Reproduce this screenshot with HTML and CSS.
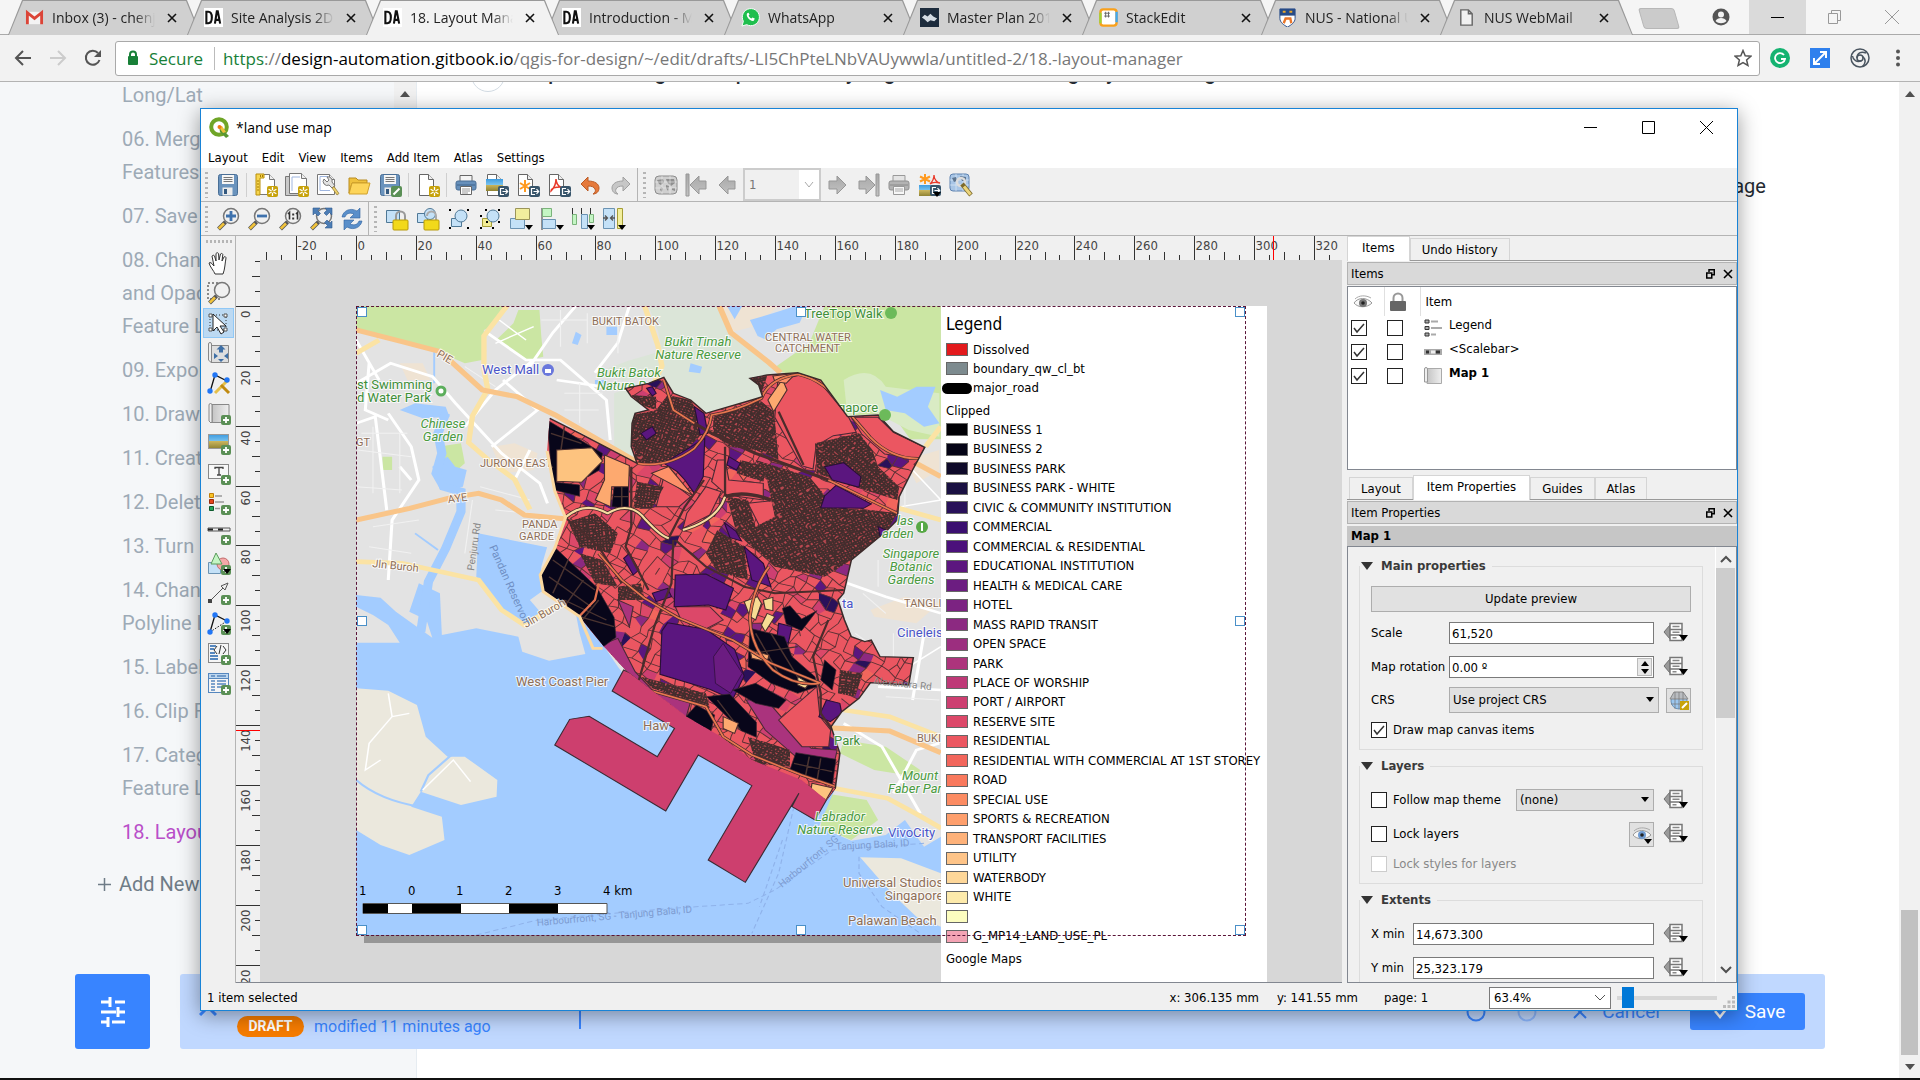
FILE: index.html
```html
<!DOCTYPE html>
<html lang="en">
<head>
<meta charset="utf-8">
<title>18. Layout Manager</title>
<link rel="stylesheet" href="styles.css">
</head>
<body>
<svg class="defs" aria-hidden="true">
  <defs>
    <linearGradient id="gSky" x1="0" y1="0" x2="0" y2="1"><stop offset="0" stop-color="#3d9be0"/><stop offset=".5" stop-color="#7cc4ee"/><stop offset=".5" stop-color="#c9b45c"/><stop offset="1" stop-color="#8f8232"/></linearGradient>
    <linearGradient id="gRoll"><stop offset="0" stop-color="#c4c4c4"/><stop offset="1" stop-color="#efefef"/></linearGradient>
    <linearGradient id="gGrey" x1="0" y1="0" x2="0" y2="1"><stop offset="0" stop-color="#a8a8a8"/><stop offset="1" stop-color="#c2c2c2"/></linearGradient>
  </defs>
  <symbol id="bStar" viewBox="0 0 11 11"><rect width="11" height="11" rx="2" fill="#c7a20a"/><path d="M5.500 1v9M1.600 3.300l7.800 4.400M9.400 3.300L1.600 7.700" stroke="#fff" stroke-width="1.300"/><circle cx="5.500" cy="5.500" r="1.200" fill="#c7a20a"/></symbol>
  <symbol id="bExp" viewBox="0 0 11 11"><rect width="11" height="11" rx="2" fill="#38556b"/><path d="M6 2.500H2.500v6H6M4.500 5.500h5M7.500 3.200l2.200 2.300-2.200 2.300" fill="none" stroke="#fff" stroke-width="1.200"/></symbol>
  <symbol id="bPlus" viewBox="0 0 10 10"><rect width="10" height="10" rx="2" fill="#5a8f55"/><path d="M5 2v6M2 5h6" stroke="#fff" stroke-width="1.800"/></symbol>
  <symbol id="bDrop" viewBox="0 0 8 5"><path d="M0 0h8L4 5z" fill="#000"/></symbol>
  <symbol id="sheet" viewBox="0 0 24 24"><path d="M3.500 1.500h12l5 5v15h-17z" fill="#fff" stroke="#777"/><path d="M15.500 1.500v5h5" fill="#eee" stroke="#777"/></symbol>
  <symbol id="page" viewBox="0 0 24 24"><path d="M4.500 1.500h9l5 5v16h-14z" fill="#fff" stroke="#666"/><path d="M13.500 1.500v5h5" fill="#eee" stroke="#666"/></symbol>
  <symbol id="lens" viewBox="0 0 24 24"><circle cx="15" cy="9" r="7.500" fill="#f0f0f0" stroke="#777" stroke-width="1.500"/><path d="M9.500 15l-7 7" stroke="#555" stroke-width="4"/><path d="M8 16.500L2.800 21.700" stroke="#f3c43a" stroke-width="2.600"/></symbol>

  <symbol id="save" viewBox="0 0 24 24"><rect x="2.500" y="1.500" width="19" height="21" rx="2" fill="#6a93bd" stroke="#4a6f96"/><path d="M6 2h12v9H6z" fill="#f6f6f6"/><path d="M7.500 4.500h9M7.500 6.500h9M7.500 8.500h9" stroke="#777"/><path d="M6.500 14.500h10v8h-10z" fill="#ececec"/><path d="M8 16h3v5H8z" fill="#34597f"/></symbol>
  <symbol id="newlayout" viewBox="0 0 24 24"><use href="#sheet"/><path d="M2 1h8v4H6v17H2z" fill="#f6d54f" stroke="#b98f0a"/><path d="M6.500 2v2M8.500 2v2M3 8h2M3 11h2M3 14h2M3 17h2" stroke="#a67c00"/><use href="#bStar" x="13" y="13" width="11" height="11"/></symbol>
  <symbol id="duplayout" viewBox="0 0 24 24"><path d="M.500 3.500h4v16h13v3H.500z" fill="#c9c9c9" stroke="#777"/><use href="#sheet" x="1" y="-1"/><path d="M7 4h8M7 4v14" stroke="#9fb6e0"/><use href="#bStar" x="13" y="13" width="11" height="11"/></symbol>
  <symbol id="manager" viewBox="0 0 24 24"><use href="#sheet" x="-2"/><path d="M4 3.500h8M4 3.500v14h10" fill="none" stroke="#9fb6e0"/><path d="M8 6a4 4 0 0 0 5 6l3 3 3-2-3-4a4 4 0 0 0-5-5l2 3-2 2z" fill="#e2e2e2" stroke="#777"/><path d="M16 15l5 7 2-1.500-5-7z" fill="#ecd06c" stroke="#8b7430" stroke-width=".700"/></symbol>
  <symbol id="folder" viewBox="0 0 24 24"><path d="M2 5h7l2 2h9v3H5L2 20z" fill="#efc13d" stroke="#b98c22"/><path d="M5 10h18l-3 11H2z" fill="#fdd55a" stroke="#d0a12c"/></symbol>
  <symbol id="saveas" viewBox="0 0 24 24"><use href="#save"/><rect x="13" y="13" width="11" height="11" rx="2" fill="#5a8f55"/><path d="M15.500 21.500l6-6" stroke="#fff" stroke-width="2"/></symbol>
  <symbol id="addpage" viewBox="0 0 24 24"><use href="#page" x="-1"/><use href="#bStar" x="13" y="13" width="11" height="11"/></symbol>
  <symbol id="print" viewBox="0 0 24 24"><path d="M6 2.500h12V9H6z" fill="#f4f4f4" stroke="#666"/><rect x="2" y="8" width="20" height="9" rx="2" fill="#6790bb" stroke="#4a6f96"/><path d="M3 12h18" stroke="#3e638a"/><path d="M6.500 13.500h11v8h-11z" fill="#fff" stroke="#666"/><path d="M8 16h8M8 18h8M8 20h6" stroke="#999"/></symbol>
  <symbol id="printg" viewBox="0 0 24 24"><path d="M6 2.500h12V9H6z" fill="#e4e4e4" stroke="#999"/><rect x="2" y="8" width="20" height="9" rx="2" fill="#b3b3b3" stroke="#909090"/><path d="M3 12h18" stroke="#8a8a8a"/><path d="M6.500 13.500h11v8h-11z" fill="#f7f7f7" stroke="#999"/><path d="M8 16h8M8 18h8" stroke="#aaa"/></symbol>
  <symbol id="expimg" viewBox="0 0 24 24"><use href="#page" x="-2"/><rect x="1" y="6" width="17" height="12" fill="url(#gSky)"/><use href="#bExp" x="13" y="13" width="11" height="11"/></symbol>
  <symbol id="expsvg" viewBox="0 0 24 24"><use href="#page" x="-2"/><path d="M9 7v12M4 10l10 6M14 10L4 16" stroke="#ff9a1f" stroke-width="2"/><use href="#bExp" x="13" y="13" width="11" height="11"/></symbol>
  <symbol id="exppdf" viewBox="0 0 24 24"><use href="#page" x="-2"/><path d="M9 6c0 5-2 9-5 12 0-3 5-4 10-4-3 0-5-5-5-8z" fill="none" stroke="#e83a2b" stroke-width="1.500"/><use href="#bExp" x="13" y="13" width="11" height="11"/></symbol>
  <symbol id="undo" viewBox="0 0 24 24"><path d="M3 11l7-7v4c7 0 11 3 11 7 0 4-3 6-6 6 2-1 3-3 2-5s-3-3-7-3v5z" fill="#e5793b" stroke="#bb5a24"/></symbol>
  <symbol id="redo" viewBox="0 0 24 24"><path d="M21 11l-7-7v4C7 8 3 11 3 15c0 4 3 6 6 6-2-1-3-3-2-5s3-3 7-3v5z" fill="#c7c7c7" stroke="#a0a0a0"/></symbol>
  <symbol id="atlas" viewBox="0 0 24 24"><rect x="1" y="3" width="22" height="18" rx="4" fill="#cfcfcf" stroke="#8c8c8c"/><path d="M3 7l6-1 1 3-3 3-2-1zM7 14l2 1-1 4-2-2zM12 6l8 0 1 4-4 3-4-4zM12 12l3 1-1 5-2-3zM18 15l3 0v3l-3-1z" fill="#8f8f8f"/><path d="M8 3v18M16 3v18M1 9h22M1 15h22" stroke="#eee" stroke-width=".600"/></symbol>
  <symbol id="first" viewBox="0 0 24 24"><path d="M1 1h3v22H1zM5 12l9-9v5h7v8h-7v5z" fill="url(#gGrey)" stroke="#979797"/></symbol>
  <symbol id="prev" viewBox="0 0 24 24"><path d="M3 12l9-9v5h7v8h-7v5z" fill="url(#gGrey)" stroke="#979797"/></symbol>
  <symbol id="next" viewBox="0 0 24 24"><path d="M21 12l-9-9v5H4v8h8v5z" fill="url(#gGrey)" stroke="#979797"/></symbol>
  <symbol id="last" viewBox="0 0 24 24"><path d="M20 1h3v22h-3zM19 12l-9-9v5H3v8h7v5z" fill="url(#gGrey)" stroke="#979797"/></symbol>
  <symbol id="expatlas" viewBox="0 0 24 24"><path d="M7 1v10M2 3.500l10 5M12 3.500l-10 5" stroke="#ff9a1f" stroke-width="2"/><path d="M16 2c0 5-2 7-4 9 2-2 6-2 10-1-3 0-6-4-6-8z" fill="none" stroke="#e83a2b" stroke-width="1.300"/><rect x="1" y="12" width="18" height="11" fill="url(#gSky)"/><use href="#bExp" x="12" y="12" width="11" height="11"/><use href="#bDrop" x="15" y="19" width="8" height="5"/></symbol>
  <symbol id="setatlas" viewBox="0 0 24 24"><rect x="1" y="1" width="19" height="17" rx="3" fill="#a9c6e6" stroke="#5f83b0"/><path d="M1 7h19M1 12h19M7 1v17M14 1v17" stroke="#dbe9f6" stroke-width=".700"/><path d="M3 5l4-1 1 4-3 1zM11 3l6 1 0 4-4 0z" fill="#5f7690"/><circle cx="12" cy="9" r="4" fill="none" stroke="#ddd" stroke-width="2.500"/><path d="M13 11l9 11" stroke="#7c6a2c" stroke-width="4.500"/><path d="M15 13.500l6.500 8" stroke="#ecd57c" stroke-width="3"/></symbol>

  <symbol id="zin" viewBox="0 0 24 24"><use href="#lens"/><path d="M15 4v10M10 9h10" stroke="#3f72ad" stroke-width="2.800"/></symbol>
  <symbol id="zout" viewBox="0 0 24 24"><use href="#lens"/><path d="M10 9h10" stroke="#3f72ad" stroke-width="2.800"/></symbol>
  <symbol id="zone" viewBox="0 0 24 24"><use href="#lens"/><path d="M10 7l1.500-1.500V12.500M18 7l1.500-1.500V12.500" fill="none" stroke="#333" stroke-width="1.600"/><path d="M14.200 6.500h2v2h-2zM14.200 10.500h2v2h-2z" fill="#333"/></symbol>
  <symbol id="zfull" viewBox="0 0 24 24"><use href="#lens"/><path d="M4 1h7L8.500 3.500l3 3-2.500 2.500-3-3L4 8zM23 1v7l-2.500-2.500-3 3L15 6l3-3-2-2zM23 21h-7l2.500-2.500-3-3 2.500-2.500 3 3L23 14z" fill="#4c7db5" stroke="#305b8e" stroke-width=".600"/></symbol>
  <symbol id="refresh" viewBox="0 0 24 24"><path d="M2 10C3 4 10 0 17 4l3-3v10H10l4-4C9 5 6 7 5 10zM22 14c-1 6-8 10-15 6l-3 3V13h10l-4 4c5 2 8 0 9-3z" fill="#5a8fca" stroke="#2f629d" stroke-width=".600"/></symbol>
  <symbol id="lock" viewBox="0 0 24 24"><path d="M1.500 3.500h13v12h-13z" fill="#c4e1f7" stroke="#4f7896"/><path d="M11 13V9a4.500 4.500 0 0 1 9 0v4" fill="none" stroke="#999" stroke-width="2"/><rect x="8" y="13" width="15" height="10" rx="1" fill="#f2d91b" stroke="#b89a0a"/></symbol>
  <symbol id="unlock" viewBox="0 0 24 24"><path d="M1.500 6.500h10v9h-10z" fill="#c4e1f7" stroke="#4f7896"/><circle cx="14" cy="7" r="5.500" fill="#c4e1f7" stroke="#4f7896"/><path d="M11 9a4.500 4.500 0 0 1 9 0v4" fill="none" stroke="#aaa" stroke-width="2"/><rect x="8" y="13" width="15" height="10" rx="1" fill="#f2d91b" stroke="#b89a0a"/></symbol>
  <symbol id="group" viewBox="0 0 24 24"><path d="M4.500 11.500h10v8h-10z" fill="#c4e1f7" stroke="#4f7896"/><circle cx="14" cy="9" r="6" fill="#c4e1f7" stroke="#4f7896"/><path d="M2 3h2M20 3h2M2 21h2M20 21h2" stroke="#000" stroke-width="2"/></symbol>
  <symbol id="ungroup" viewBox="0 0 24 24"><path d="M4.500 11.500h9v8h-9z" fill="#f2ec94" stroke="#a59d35"/><circle cx="15" cy="9" r="6" fill="#c4e1f7" stroke="#4f7896"/><path d="M7 3h2M20 3h2M2 9h2M2 21h2M14 21h2M20 15h2M8 15h2" stroke="#000" stroke-width="2"/></symbol>
  <symbol id="raise" viewBox="0 0 24 24"><path d="M1.500 11.500h14v10h-14z" fill="#c4e1f7" stroke="#6b93b3"/><path d="M6.500 1.500h14v11h-14z" fill="#f2ee9d" stroke="#9b955a"/><use href="#bDrop" x="16" y="18" width="8" height="5"/></symbol>
  <symbol id="align" viewBox="0 0 24 24"><path d="M2 1v22" stroke="#333"/><path d="M2.500 1.500h9v8h-9z" fill="#c4f5c4" stroke="#7bb37b"/><path d="M2.500 12.500h13v9h-13z" fill="#c4e1f7" stroke="#6b93b3"/><use href="#bDrop" x="16" y="18" width="8" height="5"/></symbol>
  <symbol id="distr" viewBox="0 0 24 24"><path d="M1.500 1v8M10.500 1v6M19.500 1v8" stroke="#333"/><path d="M1.500 7.500h4v10h-4zM18.500 7.500h4v8h-4z" fill="#c4f5c4" stroke="#7bb37b"/><path d="M10.500 7.500h6v14h-6z" fill="#c4e1f7" stroke="#6b93b3"/><use href="#bDrop" x="16" y="18" width="8" height="5"/></symbol>
  <symbol id="resize" viewBox="0 0 24 24"><path d="M1.500 1.500h11v20h-11z" fill="#c4e1f7" stroke="#6b93b3"/><path d="M15.500 1.500h5v20h-5z" fill="#f2ee9d" stroke="#a59d35"/><path d="M1 11h4M3 8.500l2.500 2.500L3 13.500M13 11H9M11 8.500L8.500 11l2.500 2.500" fill="none" stroke="#555" stroke-width="1.300"/><use href="#bDrop" x="16" y="18" width="8" height="5"/></symbol>

  <symbol id="hand" viewBox="0 0 24 24"><path d="M8 23c-1-3-5-7-6-11 1-1 3 0 4 2l1 1L5 5c1-1 2-1 2.500 0L9 10V2.500c1-1 2-1 2.500 0L12 9l1.500-6c1-1 2-.500 2.300.500L15 10l2-4c1-1 2 0 2 1-1 5-1 11-3 16z" fill="#fff" stroke="#333"/></symbol>
  <symbol id="zsel" viewBox="0 0 24 24"><path d="M1 2h12v16H1z" fill="none" stroke="#222" stroke-dasharray="2 2"/><use href="#lens"/></symbol>
  <symbol id="select" viewBox="0 0 24 24"><path d="M3 4h16v15H3z" fill="none" stroke="#333" stroke-dasharray="1 2"/><path d="M2 3h3v3H2zM17 3h3v3h-3zM2 17h3v3H2zM17 17h3v3h-3z" fill="#fff" stroke="#555"/><path d="M6 3l0 17 4-4 4 7 3-2-4-6h6z" fill="#fff" stroke="#222"/></symbol>
  <symbol id="movec" viewBox="0 0 24 24"><path d="M4 4.500h17.500v17H4z" fill="#dedede" stroke="#888"/><path d="M1.500 3a1.500 1.500 0 0 1 3 0v18h-1l-2-2z" fill="#eee" stroke="#888"/><path d="M14 4l4.500 4.500H16v3h-4v-3H9.500zM14 21l-3-3h6zM7 12l4 3-4 3zM21 12l-4 3 4 3z" fill="#3f6fa5"/></symbol>
  <symbol id="nodes" viewBox="0 0 24 24"><path d="M3 21L8 4l12 6" fill="none" stroke="#111" stroke-width="1.300"/><path d="M8 22L20 10" stroke="#e5c04b" stroke-width="3"/><path d="M14 14l8 8" stroke="#c08a10" stroke-width="3"/><circle cx="8" cy="4" r="2.700" fill="#2176f5"/><circle cx="20" cy="9" r="2.700" fill="#2176f5"/><circle cx="3" cy="20" r="2.700" fill="#2176f5"/></symbol>
  <symbol id="addmap" viewBox="0 0 24 24"><path d="M5 3.500h17v18H5z" fill="url(#gRoll)" stroke="#888"/><path d="M2 4a1.500 1.500 0 0 1 3 0v17l-1 1-2-2z" fill="#eee" stroke="#888"/><use href="#bPlus" x="14" y="14" width="10" height="10"/></symbol>
  <symbol id="addimg" viewBox="0 0 24 24"><rect x="1.500" y="3.500" width="20" height="14" fill="url(#gSky)" stroke="#999"/><use href="#bPlus" x="14" y="14" width="10" height="10"/></symbol>
  <symbol id="addlab" viewBox="0 0 24 24"><rect x="1.500" y="3.500" width="20" height="14" fill="#f8f8f8" stroke="#888"/><path d="M8 8V6.500h8V8M12 7v7M10 14h4" fill="none" stroke="#444" stroke-width="1.300"/><use href="#bPlus" x="14" y="14" width="10" height="10"/></symbol>
  <symbol id="addleg" viewBox="0 0 24 24"><path d="M2.500 2.500h4v4h-4z" fill="#f7c325" stroke="#c17e0a"/><path d="M2.500 8.500h4v4h-4z" fill="#e5441b" stroke="#982a0c"/><path d="M2.500 15.500h4v4h-4z" fill="#25a55a" stroke="#0d5a2d"/><path d="M8 5h7M8 11h9M8 17.500h5" stroke="#999" stroke-width="1.500"/><use href="#bPlus" x="14" y="14" width="10" height="10"/></symbol>
  <symbol id="addbar" viewBox="0 0 24 24"><path d="M1 7h22v3H1z" fill="#eee" stroke="#555"/><path d="M1 8.500h5M11 8.500h5" stroke="#222" stroke-width="2"/><use href="#bPlus" x="14" y="14" width="10" height="10"/></symbol>
  <symbol id="addshape" viewBox="0 0 24 24"><path d="M1.500 11.500h12v11h-12z" fill="#c4e1f7" stroke="#6b93b3"/><circle cx="16" cy="13" r="6" fill="#f5a9a9" stroke="#c26b6b"/><path d="M9 2l6 11H4z" fill="#c4f5c4" stroke="#5b9b5b"/><use href="#bPlus" x="14" y="14" width="10" height="10"/><use href="#bDrop" x="16" y="18" width="8" height="5"/></symbol>
  <symbol id="addarrow" viewBox="0 0 24 24"><path d="M3 20L18 5" stroke="#555"/><path d="M21 2l-7 3 4 4z" fill="#eee" stroke="#555"/><path d="M1 18h4v4H1z" fill="#444"/><use href="#bPlus" x="14" y="14" width="10" height="10"/></symbol>
  <symbol id="addnode" viewBox="0 0 24 24"><path d="M3 21L8 4l12 6" fill="none" stroke="#111" stroke-width="1.300"/><path d="M3 21l17-11" stroke="#111" stroke-dasharray="1.500 1.500"/><circle cx="8" cy="4" r="2.700" fill="#2176f5"/><circle cx="20" cy="10" r="2.700" fill="#2176f5"/><circle cx="3" cy="21" r="2.700" fill="#2176f5"/><use href="#bPlus" x="14" y="14" width="10" height="10"/><use href="#bDrop" x="16" y="18" width="8" height="5"/></symbol>
  <symbol id="addhtml" viewBox="0 0 24 24"><rect x="1.500" y="2.500" width="20" height="19" fill="#f5f5f5" stroke="#888"/><path d="M3 5h6M3 8h4M3 12h5M3 15h8M3 18h8" stroke="#5687be" stroke-width="2"/><path d="M10 5L7 9l3 4M16 5l3 4-3 4M14 4l-2 9" fill="none" stroke="#333"/><use href="#bPlus" x="14" y="14" width="10" height="10"/></symbol>
  <symbol id="addtable" viewBox="0 0 24 24"><rect x="1.500" y="2.500" width="20" height="19" fill="#f5f5f5" stroke="#5687be"/><path d="M2 3h19v4H2z" fill="#bcd6ef"/><path d="M2 7.500h19" stroke="#5687be"/><path d="M4 5h4M10 5h9M4 10h4M10 10h9M4 13h4M10 13h9M4 16h4M10 16h5M4 19h4" stroke="#5687be" stroke-width="1.300"/><use href="#bPlus" x="14" y="14" width="10" height="10"/></symbol>

  <symbol id="dd" viewBox="0 0 26 24"><path d="M7 4L1 11l6 7z" fill="#9a9a9a" stroke="#707070"/><path d="M7 2.500h12v17H7zM7 8.500h12M7 14h12" fill="#fff" stroke="#777" stroke-width="1.500"/><path d="M9.500 5.500h7M9.500 11.300h7M9.500 16.800h4" stroke="#888" stroke-width="1.500"/><path d="M16 14h9l-4.500 6z" fill="#000"/></symbol>
  <symbol id="eye" viewBox="0 0 20 20"><path d="M1 11c4-6 13-6 18 0-5 5-14 5-18 0z" fill="#f7f7f7" stroke="#999"/><path d="M2 7c4-4 11-4 16-1" fill="none" stroke="#aaa"/><circle cx="10" cy="11" r="4" fill="currentColor"/><circle cx="10" cy="11" r="1.800" fill="#222"/></symbol>
  <symbol id="float" viewBox="0 0 9 10"><path d="M3 3V.750h5.250v5H6M.750 4h5v5h-5z" fill="none" stroke="#000" stroke-width="1.500"/></symbol>
  <symbol id="x" viewBox="0 0 10 10"><path d="M1 1l8 8M9 1L1 9" stroke="currentColor" stroke-width="1.600"/></symbol>
  <symbol id="da" viewBox="0 0 20 20"><rect width="20" height="20" fill="#fff"/><path d="M2.500 4v12h2c5 0 5-12 0-12zM11.500 16.500l2-13h1l2.500 13M12.500 12.500h4" fill="none" stroke="#111" stroke-width="2.200"/></symbol>
</svg>

<header class="chrome">
  <div class="strip">
    <nav class="tabs" aria-label="Browser tabs">
      <div class="tab"><svg class="fav" viewBox="0 0 20 20"><path d="M1 4h18v13H1z" fill="#f3f3f3"/><path d="M2.500 17V5l7.500 6 7.500-6v12" fill="none" stroke="#db4437" stroke-width="3"/></svg><span>Inbox (3) - chenjie</span><button aria-label="Close tab"><svg><use href="#x"/></svg></button></div>
      <div class="tab"><svg class="fav"><use href="#da"/></svg><span>Site Analysis 2D Map</span><button aria-label="Close tab"><svg><use href="#x"/></svg></button></div>
      <div class="tab on"><svg class="fav"><use href="#da"/></svg><span>18. Layout Manager</span><button aria-label="Close tab"><svg><use href="#x"/></svg></button></div>
      <div class="tab"><svg class="fav"><use href="#da"/></svg><span>Introduction - Map</span><button aria-label="Close tab"><svg><use href="#x"/></svg></button></div>
      <div class="tab"><svg class="fav" viewBox="0 0 20 20"><path d="M1 19l1.500-5A9 9 0 1 1 6 17.500z" fill="#1fbe4d" stroke="#fff"/><path d="M6.500 5.500c-2 3 3 9 7 8l1-2.500-2.500-1-1 1c-1.500-.500-2.500-1.500-3-3l1-1-1-2z" fill="#fff"/></svg><span>WhatsApp</span><button aria-label="Close tab"><svg><use href="#x"/></svg></button></div>
      <div class="tab"><svg class="fav" viewBox="0 0 20 20"><rect width="20" height="20" fill="#1d2c3d"/><path d="M2 10l3-3 3 2 3-3 3 3 4 2-3 3-4-1-3 2-3-3z" fill="#d3dbe3"/></svg><span>Master Plan 2014</span><button aria-label="Close tab"><svg><use href="#x"/></svg></button></div>
      <div class="tab"><svg class="fav" viewBox="0 0 20 20"><rect x="1.500" y="1.500" width="17" height="17" rx="3" fill="#fff" stroke="#f9a01b" stroke-width="2.500"/><path d="M1.500 16V5" stroke="#9bd33b" stroke-width="2.500"/><path d="M18.500 4v11" stroke="#3fa9f5" stroke-width="2.500"/><path d="M7 4v6M10 4v6M5.500 5.500h6M5.500 8.500h6" stroke="#666"/></svg><span>StackEdit</span><button aria-label="Close tab"><svg><use href="#x"/></svg></button></div>
      <div class="tab"><svg class="fav" viewBox="0 0 20 20"><path d="M2 1h16v10c0 4-4 7-8 9-4-2-8-5-8-9z" fill="#fff" stroke="#274b87"/><path d="M2 1h16v7H2z" fill="#274b87"/><path d="M5 4h3M12 4h3" stroke="#e9a72b" stroke-width="2"/><path d="M6 16l2-5 5 0 1 5" fill="none" stroke="#e9772b" stroke-width="2.500"/></svg><span>NUS - National Uni</span><button aria-label="Close tab"><svg><use href="#x"/></svg></button></div>
      <div class="tab"><svg class="fav" viewBox="0 0 20 20"><path d="M4 2h8l4 4v12H4zM12 2v4h4" fill="#f1f1f1" stroke="#666" stroke-width="1.500"/></svg><span>NUS WebMail</span><button aria-label="Close tab"><svg><use href="#x"/></svg></button></div>
    </nav>
    <button class="newtab" aria-label="New tab"></button>
    <div class="wbtns">
      <button aria-label="Profile"><svg width="18" height="18" viewBox="0 0 18 18"><circle cx="9" cy="9" r="8.500" fill="#555"/><circle cx="9" cy="6.500" r="3" fill="#f3f3f3"/><path d="M3.500 13c2-4 9-4 11 0-3 3-8 3-11 0z" fill="#f3f3f3"/></svg></button>
      <button class="hov" aria-label="Minimise"><svg width="14" height="14"><path d="M0 7.500h13" stroke="#000"/></svg></button>
      <button aria-label="Restore"><svg width="14" height="14"><path d="M.500 3.500h9v10h-9zM3.500 3V.500h9v10H10" fill="none" stroke="#999"/></svg></button>
      <button aria-label="Close"><svg width="14" height="14"><path d="M0 0l14 14M14 0L0 14" stroke="#999"/></svg></button>
    </div>
  </div>
  <div class="bar">
    <button aria-label="Back"><svg width="18" height="18" viewBox="0 0 18 18"><path d="M17 9H2M9 2L2 9l7 7" fill="none" stroke="#555" stroke-width="2"/></svg></button>
    <button aria-label="Forward"><svg width="18" height="18" viewBox="0 0 18 18"><path d="M1 9h15M9 2l7 7-7 7" fill="none" stroke="#ccc" stroke-width="2"/></svg></button>
    <button aria-label="Reload"><svg width="18" height="18" viewBox="0 0 18 18"><path d="M15.500 11a7 7 0 1 1-1.500-7" fill="none" stroke="#555" stroke-width="2"/><path d="M17 1v7h-7z" fill="#555"/></svg></button>
    <div class="omni">
      <svg width="12" height="16" viewBox="0 0 12 16"><path d="M3 7V4.500a3 3 0 0 1 6 0V7" fill="none" stroke="#188038" stroke-width="2"/><rect x="1" y="6" width="10" height="9" rx="1" fill="#188038"/></svg>
      <span class="sec">Secure</span>
      <span class="url"><b>https</b>://<i>design-automation.gitbook.io</i>/qgis-for-design/~/edit/drafts/-LI5ChPteLNbVAUywwla/untitled-2/18.-layout-manager</span>
      <button aria-label="Bookmark"><svg width="18" height="18" viewBox="0 0 18 18"><path d="M9 1.500l2.200 5.200 5.600.500-4.200 3.700 1.300 5.500L9 13.500l-4.900 2.900 1.300-5.500L1.200 7.200l5.600-.500z" fill="none" stroke="#555" stroke-width="1.500"/></svg></button>
    </div>
    <button class="ext" aria-label="Grammarly"><svg width="20" height="20"><circle cx="10" cy="10" r="10" fill="#15b371"/><path d="M14 7a5 5 0 1 0 1 4h-4" fill="none" stroke="#fff" stroke-width="1.800"/></svg></button>
    <button class="ext" aria-label="Full page capture"><svg width="20" height="20"><rect width="20" height="20" fill="#2f80ed"/><path d="M4 16L16 4M10 4h6v6M4 10v6h6" fill="none" stroke="#fff" stroke-width="2"/></svg></button>
    <button class="ext" aria-label="Extension"><svg width="20" height="20" fill="none" stroke="#4a5560" stroke-width="1.500"><circle cx="10" cy="10" r="9"/><circle cx="10" cy="10" r="3"/><path d="M7 10c0-5 4-7 9-5M11.500 12.600C7 15 3 12 2.500 8M12.500 8.500c4 3 3 7 0 10"/></svg></button>
    <button class="ext" aria-label="Menu"><svg width="20" height="20" fill="#555"><circle cx="10" cy="3.500" r="2"/><circle cx="10" cy="10" r="2"/><circle cx="10" cy="16.500" r="2"/></svg></button>
  </div>
</header>

<main class="site">
  <aside class="side">
    <ul>
      <li><a href="#p5">Long/Lat</a></li>
      <li><a href="#p6">06. Merge<br>Features</a></li>
      <li><a href="#p7">07. Save</a></li>
      <li><a href="#p8">08. Change<br>and Opacity<br>Feature Layer</a></li>
      <li><a href="#p9">09. Export</a></li>
      <li><a href="#p10">10. Draw</a></li>
      <li><a href="#p11">11. Create</a></li>
      <li><a href="#p12">12. Delete</a></li>
      <li><a href="#p13">13. Turn</a></li>
      <li><a href="#p14">14. Change<br>Polyline L</a></li>
      <li><a href="#p15">15. Label</a></li>
      <li><a href="#p16">16. Clip F</a></li>
      <li><a href="#p17">17. Categ<br>Feature L</a></li>
      <li><a class="cur" href="#p18">18. Layout</a></li>
    </ul>
    <button class="addnew"><svg width="13" height="13"><path d="M6.500 0v13M0 6.500h13" stroke="#6f7c87" stroke-width="1.500"/></svg>Add New Page</button>
    <div class="sidescroll"><svg width="10" height="6"><path d="M0 6l5-6 5 6z" fill="#505050"/></svg></div>
  </aside>
  <article class="doc">
    <span class="ring"></span>
    <p class="cut">Expand the Page Size option in every Page and Resize it using any measuring</p>
    <p class="tail">page</p>
  </article>
  <div class="mainscroll"><svg width="10" height="6"><path d="M0 6l5-6 5 6z" fill="#505050"/></svg><i></i><svg width="10" height="6"><path d="M0 0l5 6 5-6z" fill="#505050"/></svg></div>

  <div class="dock">
    <button class="tune" aria-label="Settings"><svg width="26" height="30" viewBox="0 0 26 30"><path d="M1 5h9M15 5h10M10 0v10M1 15h15M18 15h7M18 10v10M1 25h6M12 25h13M8 20v10" stroke="#fff" stroke-width="3"/></svg></button>
    <div class="draftbar">
      <svg class="chev" width="18" height="10"><path d="M1 9l8-8 8 8" fill="none" stroke="#3884ff" stroke-width="3"/></svg>
      <span class="badge">DRAFT</span>
      <span class="mod">modified 11 minutes ago</span>
      <span class="vr"></span>
      <span class="acts">
        <svg width="20" height="20"><circle cx="10" cy="10" r="8.500" fill="none" stroke="#3884ff" stroke-width="2"/></svg>
        <svg width="20" height="20"><circle cx="10" cy="10" r="8.500" fill="none" stroke="#8db8ff" stroke-width="2"/></svg>
        <button class="cancel"><svg width="14" height="14"><path d="M1 1l12 12M13 1L1 13" stroke="#3884ff" stroke-width="2"/></svg>Cancel</button>
        <button class="savebtn"><svg width="16" height="14"><path d="M2 6l5 6 7-9" fill="none" stroke="#fff" stroke-width="2.500"/></svg>Save</button>
      </span>
    </div>
  </div>
</main>
<div class="taskbar"></div>

<section class="win" aria-label="land use map">
  <div class="title">
    <svg width="21" height="21" viewBox="0 0 21 21"><circle cx="10" cy="10" r="7.800" fill="none" stroke="#6fa527" stroke-width="4"/><path d="M10 9l10 10-3 2-6-6z" fill="#589632"/><path d="M9 9l4 0 4 6-3 1z" fill="#f0c03a"/><circle cx="10.500" cy="10" r="2" fill="#ee7913"/></svg>
    <h1>*land use map</h1>
    <button aria-label="Minimise"><svg width="13" height="13"><path d="M0 6.500h13" stroke="#000"/></svg></button>
    <button aria-label="Maximise"><svg width="13" height="13"><path d="M.500.500h12v12h-12z" fill="none" stroke="#000"/></svg></button>
    <button aria-label="Close"><svg width="13" height="13"><path d="M0 0l13 13M13 0L0 13" stroke="#000"/></svg></button>
  </div>
  <nav class="menu"><button>Layout</button><button>Edit</button><button>View</button><button>Items</button><button>Add Item</button><button>Atlas</button><button>Settings</button></nav>

  <div class="tools">
    <i class="grip"></i>
    <button aria-label="Save"><svg><use href="#save"/></svg></button><i class="sep"></i>
    <button aria-label="New layout"><svg><use href="#newlayout"/></svg></button>
    <button aria-label="Duplicate"><svg><use href="#duplayout"/></svg></button>
    <button aria-label="Layout manager"><svg><use href="#manager"/></svg></button>
    <button aria-label="Open template"><svg><use href="#folder"/></svg></button>
    <button aria-label="Save as template"><svg><use href="#saveas"/></svg></button><i class="sep"></i>
    <button aria-label="Add page"><svg><use href="#addpage"/></svg></button><i class="sep"></i>
    <button aria-label="Print"><svg><use href="#print"/></svg></button>
    <button aria-label="Export image"><svg><use href="#expimg"/></svg></button>
    <button aria-label="Export SVG"><svg><use href="#expsvg"/></svg></button>
    <button aria-label="Export PDF"><svg><use href="#exppdf"/></svg></button>
    <button aria-label="Undo"><svg><use href="#undo"/></svg></button>
    <button aria-label="Redo"><svg><use href="#redo"/></svg></button>
    <i class="edge"></i><i class="grip"></i>
    <button aria-label="Preview atlas"><svg><use href="#atlas"/></svg></button>
    <button aria-label="First"><svg><use href="#first"/></svg></button>
    <button aria-label="Previous"><svg><use href="#prev"/></svg></button>
    <select class="feature" aria-label="Atlas feature" disabled><option>1</option></select>
    <button aria-label="Next"><svg><use href="#next"/></svg></button>
    <button aria-label="Last"><svg><use href="#last"/></svg></button>
    <button aria-label="Print atlas"><svg><use href="#printg"/></svg></button>
    <button aria-label="Export atlas"><svg><use href="#expatlas"/></svg></button>
    <button aria-label="Atlas settings"><svg><use href="#setatlas"/></svg></button>
  </div>
  <div class="tools">
    <i class="grip"></i>
    <button aria-label="Zoom in"><svg><use href="#zin"/></svg></button>
    <button aria-label="Zoom out"><svg><use href="#zout"/></svg></button>
    <button aria-label="Zoom 100%"><svg><use href="#zone"/></svg></button>
    <button aria-label="Zoom full"><svg><use href="#zfull"/></svg></button>
    <button aria-label="Refresh"><svg><use href="#refresh"/></svg></button>
    <i class="edge"></i><i class="grip"></i>
    <button aria-label="Lock"><svg><use href="#lock"/></svg></button>
    <button aria-label="Unlock"><svg><use href="#unlock"/></svg></button>
    <button aria-label="Group"><svg><use href="#group"/></svg></button>
    <button aria-label="Ungroup"><svg><use href="#ungroup"/></svg></button>
    <button aria-label="Raise"><svg><use href="#raise"/></svg></button>
    <button aria-label="Align"><svg><use href="#align"/></svg></button>
    <button aria-label="Distribute"><svg><use href="#distr"/></svg></button>
    <button aria-label="Resize"><svg><use href="#resize"/></svg></button>
  </div>

  <div class="work">
    <div class="box">
      <i class="hgrip"></i>
      <button aria-label="Pan"><svg><use href="#hand"/></svg></button>
      <button aria-label="Zoom"><svg><use href="#zsel"/></svg></button>
      <button class="on" aria-label="Select"><svg><use href="#select"/></svg></button>
      <button aria-label="Move content"><svg><use href="#movec"/></svg></button>
      <button aria-label="Edit nodes"><svg><use href="#nodes"/></svg></button>
      <button aria-label="Add map"><svg><use href="#addmap"/></svg></button>
      <button aria-label="Add picture"><svg><use href="#addimg"/></svg></button>
      <button aria-label="Add label"><svg><use href="#addlab"/></svg></button>
      <button aria-label="Add legend"><svg><use href="#addleg"/></svg></button>
      <button aria-label="Add scale bar"><svg><use href="#addbar"/></svg></button>
      <button aria-label="Add shape"><svg><use href="#addshape"/></svg></button>
      <button aria-label="Add arrow"><svg><use href="#addarrow"/></svg></button>
      <button aria-label="Add node item"><svg><use href="#addnode"/></svg></button>
      <button aria-label="Add HTML"><svg><use href="#addhtml"/></svg></button>
      <button aria-label="Add table"><svg><use href="#addtable"/></svg></button>
    </div>

    <div class="view">
      <svg class="rh" id="rulerH"></svg>
      <svg class="rv" id="rulerV"></svg>
      <div class="canvas">
        <div class="shadow"></div>
        <div class="paper"></div>
        <svg class="map" viewBox="356 306 585 629" width="585" height="629">
          <defs><clipPath id="area"><path d="M522 355L600 400 750 490 735 440 737 370 745 340 780 330 735 290 720 265 780 250 820 232 845 280 890 300 930 340 1050 300 1078 290 1068 255 1045 235 1090 225 1170 218 1230 240 1300 350 1380 345 1420 395 1502 442 1470 510 1435 590 1430 660 1400 695 1310 780 1290 880 1275 900 1292 960 1310 1010 1345 1025 1362 1020 1385 1070 1472 1073 1460 1155 1360 1148 1330 1195 1285 1235 1257 1280 1280 1360 1268 1465 1245 1500 1180 1440 1050 1380 970 1310 880 1250 720 1110 660 1035 600 950 505 870 497 820 535 745 563 650 535 570 515 450z"/></clipPath></defs>
          <g transform="translate(350,300) scale(.3827,.33333)">
            <path d="M0 0h1560v1920H0z" fill="#e3e3e3"/>
            <path d="M16 18H412L378 75 350 90 345 180 300 190 230 155 150 125 60 108 16 85zM440 30l55 0 5 80 5 60-40 10-45-30-38-30 45-50zM1100 210l100-80 40-112h304v400l-80 0-50-80-120 10-80-110zM230 440l60-10 10 60-40 40zM1290 1320l110 20 90 70-10 20-110-20-90-50zM1240 1480l110 20 30 60-70 60-80-40zM85 470l25 0 0 40-25 0z" fill="#cbe6a3"/>
            <path d="M780 18H960l40 80 110 110-40 90-130 40-95-55-50-60-80 20-60-30 70-30 90-30-10-60zM690 280l50-20 20 60-25 60 5 110-50-20z" fill="#dbe5d8"/>
            <path d="M1290 240q70-50 110 20l140 20v130l-80-20-100-60-60 20z" fill="#d9ebc4"/>
            <path d="M420 60l60-20M130 190l60 0 20 50-60 0zM370 440l60-10 60 30-10 50-80 10zM1360 930l90-40 90 20-60 60-110-20zM960 18l160 0-60 60-70 20zM1450 480l90-30 0 60-60 40zM620 420l60 10 10 50-60-10z" fill="#efe3d3"/>
            <g fill="#a3ccff">
              <path d="M16 885L80 893 120 935 215 1013 200 960 155 935 180 850 235 880 240 1005 330 985 440 1010 450 1055 520 1082 615 1062 600 1000 590 940 545 900 500 875 470 900 500 940 455 965 395 930 330 830 335 700 515 742 500 800 497 850 600 930 700 1100 800 1250 1268 1465 1225 1580 1310 1622 1400 1605 1450 1560 1500 1640 1544 1610V1905H16V1028H130L100 975 60 945 16 920z"/>
              <path d="M130 330l40-20 80 10 10 30-70 5zM215 500l40-30 20 30 30 10-10 50-60 10zM590 95l15 10-10 30-15-5zM890 190l30 10-5 20-30-5zM1045 60l60-20 60-22 30 0-20 50-60 20-30 30-20-10zM1385 270l45 20 50-30 50 0-20 60 30 50-40 10-50-40-50-10zM985 18l40 0-20 40zM640 240l30 0 0 20-30-5zM670 80l30 0 0 25-30 0z"/>
            </g>
            <g fill="none" stroke="#a3ccff"><path d="M250 340l-20 60 10 60-15 60 20 40 45 15 0 60-40 110-45 100-20 150" stroke-width="24"/><path d="M170 700l60 50M220 150v100" stroke-width="5"/></g>
            <path d="M16 1165L100 1172 175 1215 198 1310 255 1370 300 1370 385 1440 383 1490 290 1515 185 1475 160 1520 240 1550 247 1620 155 1665 80 1635 16 1590z" fill="#ebe8dd"/>
            <path d="M1333 1672L1440 1675 1544 1720V1880L1480 1850 1425 1790 1385 1740z" fill="#ebe8dd"/>
            <path d="M16 1440q60 60 165 80M185 1475l20-50 60-60" fill="none" stroke="#a3ccff" stroke-width="6"/>
            <path d="M100 1180l10 70-60 80-10 80 40-30M110 1250l45-10M190 1470l80-90 45 65" fill="none" stroke="#fff" stroke-width="4"/>
            <g fill="none" stroke="#fff" stroke-width="8">
              <path d="M16 250l90-60 110 40 60 80 120 150 100 90 20 60M100 340l60 100 20 100-70 120-10 180M360 100l100 80 90 0 60 60 60 60 10 120M480 180l-100 90-80 110M590 18l-60 80-60 100M730 18l-30 110-60 90M400 240l90 90-120 110M540 240l120 20M50 190l-10 140 60 30M16 370l50-20 30 280M1300 850l100 40 144 50M1500 1000l-30 200M1380 1160l164 10M1540 1330l-60 20-60 130M1290 1270l100 70 100 200M160 540l-30-40M430 540l40-90M16 120l60 120"/>
              <path d="M390 60l70 60M380 130l100-50M1470 510l74 90M1440 620l104-20M1460 1100l84-60" stroke-width="4"/>
            </g>
            <g fill="none" stroke="#f1f1f1" stroke-width="3"><path d="M30 400h120M20 450l140 20M60 380v200M130 400v180M300 200l80 60M550 30v110M620 40v90M500 60h120M560 280h100M560 330h90M600 250v120M16 560l120 10M340 560l130 40M320 600l-20 160M60 680l120-20M50 740l110 20M380 630l90 10M700 60v100M1450 540v90M1380 780v80M1340 880l60 60M1320 1000l60 50M1400 1190l140 10M1420 1000v140"/></g>
            <g fill="none" stroke="#fbe3a4" stroke-width="14">
              <path d="M410 18l-60 90 0 100 10 60-40 80-10 80 50 50 70 60 40 90M16 785l120 5 200 50 60 90 60 45 100-70 40-20M770 18l35 120 10 60-20 50M1290 1230l120 20 134 60M1265 1465l140 30 80 50 60 40M1544 380l-40 60M1435 625l109 35M16 160l60-40"/>
            </g>
            <g fill="none" stroke="#f9c589" stroke-width="15">
              <path d="M16 90l120 35 100 30 110 115 90 20 100 55 220 145M16 660l140-35 100-30 80-15 60 20 60 45 110 12M965 18l30 80 100 90 30 30M1250 1283l160 10 134 65M1480 490l64 40"/>
            </g>
            <g fill="none" stroke="#8fb2ea" stroke-width="3" stroke-dasharray="14 9">
              <path d="M330 1905L490 1860 840 1825 1040 1810 1110 1770 1260 1650 1500 1630M1160 1520l-40 200-70 180M1330 1670v50l60 100 100 80M1130 1620l-60 200"/>
            </g>
          </g>
          <g class="lbl">
            <g fill="#4a9a3f" font-size="13" font-style="italic"><text x="597" y="377">Bukit Batok</text><text x="597" y="390">Nature Re</text></g>
            <g fill="#8f6f57" font-size="11"><text x="480" y="467">JURONG EAST</text><text x="784" y="388">PIE</text></g>
            <g fill="#3f8f3a" font-size="13"><text x="838" y="412">gapore</text></g>
          </g>
          <g transform="translate(350,300) scale(.3827,.33333)">
            <g stroke="#3c2a33" stroke-width="3" fill="#cd3f6e">
              <path d="M715 1110L685 1173 848 1285 803 1370 625 1249 574 1258 535 1335 825 1533 910 1365 1050 1457 936 1680 1033 1747 1173 1480 1155 1520 1215 1560 1245 1500 1268 1465 970 1240z"/>
            </g>
            <g clip-path="url(#area)">
              <path d="M480 200h1040v1320H480z" fill="#eb5661"/>
              <g id="blocks"></g>
              <g fill="#aa337d" stroke="#4a2a35" stroke-width="3"><path d="M655 1035l45-20 45 100 45 55 100 35-12 48-160-143zM1035 1200l50-5 60 80 60 70 68 5-8 40-90-10-90-90zM700 900l40 20-10 60z"/></g>
              <g fill="#eb5661" stroke="#4a2a35" stroke-width="3"><path d="M1118 240l60-15 50 22 75 105 20 45-60 10-45 30-8 70-30-10-70-145zM1310 352l70 0 40 45 82 45-15 35-90-15-60-60zM960 480l20 0 10 60 90 10 0 50-95-15-40-40zM820 530l70 60-30 30-60 0zM1040 610l80-10-10 60-30 40zM880 640l50-80 40 15-30 70-70 40zM1120 1260l100-100 8 90 28 40-5 50-70 0z"/></g>
              <path d="M850 920l90 0 35 40-50 30-60-30z" fill="#dc4869" stroke="#4a2a35" stroke-width="3"/>
              <g id="dense"></g>
              <g fill="#5b167f" stroke="#2a1035" stroke-width="3">
                <path d="M820 490l107-75-4 115-23 50-25-40-20-25zM1240 500l50-12 45 42-5 32-70-22zM1270 556l92 56-20 13-112-2 10-35zM850 825l80-3 72 43-20 65-45-15-90 5zM830 968l100 20 75 60 25 80-30 70-60-30-130-45 5-130zM978 668l30 25 15 30-30-10zM1030 740l50 50 20 70-50-20zM1245 1200l35 10 5 30-30 25-30-15zM730 760l25 50-15 15-25-50zM760 400l30-20 10 20-25 20zM775 265l15-5 10 20-10 8zM790 880l40-15 10 25-40 15zM900 320l25 20 10 60-20 5zM1120 970l35 10-10 50-30-10zM990 470l30 20-10 20-25-15zM1380 680l20 10-15 20z"/>
              </g>
              <path d="M975 1030l50 90-30 60-40-30-5-80z" fill="#6b1c81" stroke="#2a1035" stroke-width="2"/>
              <g fill="#08061a" stroke="#39292f" stroke-width="2">
                <path d="M515 360l145 100-8 50-30 20 10-50-20-30-72 0 0 97 60 8 0 34-70-20zM690 560h38v66l-44-6zM535 742l110 120 45 90 5 60-35 30-60-85-100-85-5-60zM1045 985l90 25 20 60 60 60 5 30-50 20-70-30-60-50zM1000 1170l60-20 80 50-20 25-60-15zM932 1190l60-8 70 85 0 45-40-20zM905 1215l48 30-10 50-65-45zM1165 1358l105 20-10 80-110-50zM1130 925l20-8 30 40 40-25-40 60-40-20zM1140 1440l30 15-5 25-30-25zM1240 1080l30 30-10 60-30-30z"/>
              </g>
              <path d="M530 780l110 90M520 830l110 90M560 900l110 60M600 950l90 30M570 780l-40 100M610 840l-50 80M650 900l-50 70M525 400l80 30M560 380l-10 80M530 500l-15 20M1060 1000l60 120M1100 1000l80 150M1050 1060l120-20M1200 1370l-10 60M1230 1375l-10 70M1160 1390l100 25M960 1200l60 90M690 590h38M710 560v60" fill="none" stroke="#4a3330" stroke-width="4"/>
              <path d="M590 960l50-60 10-50" fill="none" stroke="#e0704f" stroke-width="6"/>
              <g stroke="#4a2e2e" stroke-width="3"><path d="M540 450l92-7 28 40-55 64-65-3zM1207 1450l55 14-18 36-40-25z" fill="#fdc37f"/><path d="M665 465l65 32-2 63h-44l-3 60-40-20 24-60zM1130 238l12 32-35 65-15-35zM1045 1050l50 15-5 20-40-10zM975 1250l40 20-10 30-30-15z" fill="#fda96f"/><path d="M788 520l45-20 62 86zM1105 228l60-8-25 30-30-5z" fill="#fd9068"/><path d="M1030 905l35-15 10 20-15 50-15-10zM1080 900l25-8 0 40-20-5zM1090 940l20 10-25 45-10-20zM1170 1130l30 20-10 15-20-10z" fill="#f7dc93"/></g>
              <g fill="none" stroke-linejoin="round">
                <g stroke="#4a2c2c" stroke-width="9"><path d="M750 490q80 15 150-45 40-50 45-100 60-10 130-50 20-60 95-72 70 15 130 110l60 80q60 70 140 62M820 240l25 90 55 40 45 30 115 60 190 80 180 100M650 760l60 80 60 55 90 60 140 65 100 70 130 60M715 1115l65 55 150 50 45 90 75 55 130 60 90 35M1095 800q-40 60-50 150 0 90 60 160 60 50 120 40"/></g>
                <g stroke="#4a2c2c" stroke-width="6"><path d="M845 720l-5 130-45 130-40 160M735 500v180l-15 60 60 130M925 540l-50 80-45 100M980 440v150l-30 60M1250 960l-40 110 20 110 0 60 30 50M560 650l90 90 60 110M850 720l80 80 100 60 80 20 180-10M1120 335l65 160"/></g>
                <g stroke="#e8774f" stroke-width="5"><path d="M750 490q80 15 150-45 40-50 45-100 60-10 130-50 20-60 95-72 70 15 130 110l60 80q60 70 140 62M650 760l60 80 60 55 90 60 140 65 100 70 130 60M715 1115l65 55 150 50 45 90 75 55 130 60 90 35M1095 800q-40 60-50 150 0 90 60 160 60 50 120 40M820 240l25 90 55 40M1250 540l180 100"/></g>
                <g stroke="#4a2c2c" stroke-width="11"><path d="M563 652q50-50 110-12 60-40 100 20 40 50 60 55M870 690q90-30 110-100 50-20 120 10"/></g>
                <g stroke="#f7dca0" stroke-width="6"><path d="M563 652q50-50 110-12 60-40 100 20 40 50 60 55M870 690q90-30 110-100"/></g>
              </g>
            </g>
            <path d="M522 355L600 400 750 490 735 440 737 370 745 340 780 330 735 290 720 265 780 250 820 232 845 280 890 300 930 340 1050 300 1078 290 1068 255 1045 235 1090 225 1170 218 1230 240 1300 350 1380 345 1420 395 1502 442 1470 510 1435 590 1430 660 1400 695 1310 780 1290 880 1275 900 1292 960 1310 1010 1345 1025 1362 1020 1385 1070 1472 1073 1460 1155 1360 1148 1330 1195 1285 1235 1257 1280 1280 1360 1268 1465" fill="none" stroke="#3a2a2a" stroke-width="4"/>
            <path d="M660 1045l-25 0-35-95-95-75-8-50 38-80 28-92-28-80-20-120" fill="none" stroke="#fbd9a0" stroke-width="8"/>
          </g>
          <g class="lbl">
            <g fill="#8f6f57" font-size="11"><text x="592" y="325">BUKIT BATOK</text><text x="765" y="341">CENTRAL WATER</text><text x="775" y="352">CATCHMENT</text><text x="356" y="446">GT</text><text x="904" y="607">TANGLI</text><text x="917" y="742">BUKI</text><text x="443" y="360" transform="rotate(30 443 360)" text-anchor="middle">PIE</text><text x="458" y="502" transform="rotate(-8 458 502)" text-anchor="middle">AYE</text><text x="372" y="567" transform="rotate(6 372 567)">Jln Buroh</text><text x="526" y="628" transform="rotate(-30 526 628)">Jln Buroh</text><text x="522" y="528">PANDA</text><text x="519" y="540">GARDE</text></g>
            <g fill="#8f6f57" font-size="13"><text x="516" y="686">West Coast Pier</text><text x="643" y="730">Haw</text><text x="843" y="887">Universal Studios</text><text x="885" y="900">Singapore</text><text x="848" y="925">Palawan Beach</text></g>
            <g fill="#3f8f3a" font-size="13"><text x="804" y="318">TreeTop Walk</text><text x="357" y="389">st Swimming</text><text x="357" y="402">d Water Park</text><text x="834" y="745">Park</text></g>
            <g fill="#4a9a3f" font-size="13" font-style="italic"><text x="698" y="346" text-anchor="middle">Bukit Timah</text><text x="698" y="359" text-anchor="middle">Nature Reserve</text><text x="443" y="428" text-anchor="middle">Chinese</text><text x="443" y="441" text-anchor="middle">Garden</text><text x="911" y="558" text-anchor="middle">Singapore</text><text x="911" y="571" text-anchor="middle">Botanic</text><text x="911" y="584" text-anchor="middle">Gardens</text><text x="920" y="780" text-anchor="middle">Mount</text><text x="888" y="793">Faber Par</text><text x="840" y="821" text-anchor="middle">Labrador</text><text x="840" y="834" text-anchor="middle">Nature Reserve</text><text x="897" y="525">las</text><text x="882" y="538">arden</text></g>
            <g fill="#4a55c8" font-size="13"><text x="482" y="374">West Mall</text><text x="888" y="837">VivoCity</text><text x="897" y="637">Cineleis</text><text x="842" y="608">ta</text></g>
            <g class="plain" fill="#6f8fc4" font-size="11"><text x="489" y="547" transform="rotate(66 489 547)">Pandan Reservoir</text></g>
            <g class="plain" fill="#7d9bd0" font-size="10"><text x="537" y="926" transform="rotate(-5 537 926)">Harbourfront, SG - Tanjung Balai, ID</text><text x="782" y="888" transform="rotate(-40 782 888)">Harbourfront, SG -</text><text x="836" y="850" transform="rotate(-3 836 850)">Tanjung Balai, ID</text></g>
            <g class="plain" fill="#888" font-size="10"><text x="474" y="571" transform="rotate(-82 474 571)">Penjuru Rd</text><text x="873" y="684" transform="rotate(6 873 684)">Alexandra Rd</text></g>
          </g>
          <g><circle cx="548" cy="370" r="6" fill="#6a78dc"/><path d="M545 369h6v4h-6z" fill="#fff"/><circle cx="441" cy="391" r="4" fill="#fff" stroke="#5cae5c" stroke-width="3"/><circle cx="891" cy="313" r="6" fill="#6cba5a"/><circle cx="885" cy="415" r="6" fill="#6cba5a"/><circle cx="922" cy="527" r="6" fill="#57a845"/><path d="M922 523v8" stroke="#fff" stroke-width="2"/></g>
          <g class="scale"><path d="M363 903.500h244v10h-244z" fill="#fff" stroke="#555"/><path d="M363 904h25v9h-25zM412 904h49v9h-49zM509 904h49v9h-49z" fill="#000"/><text x="359" y="895">1</text><text x="408" y="895">0</text><text x="456" y="895">1</text><text x="505" y="895">2</text><text x="554" y="895">3</text><text x="603" y="895">4 km</text></g>
        </svg>
        <div class="legend">
          <h2>Legend</h2>
          <ul class="top"><li><i style="background:#e31a1c"></i>Dissolved</li><li><i style="background:#7d8b8f"></i>boundary_qw_cl_bt</li><li class="road"><i></i>major_road</li></ul>
          <h3>Clipped</h3>
          <ul class="cls">
            <li><i style="background:#000004"></i>BUSINESS 1</li><li><i style="background:#050416"></i>BUSINESS 2</li><li><i style="background:#0f0a2a"></i>BUSINESS PARK</li><li><i style="background:#1a1042"></i>BUSINESS PARK - WHITE</li><li><i style="background:#29115a"></i>CIVIC &amp; COMMUNITY INSTITUTION</li><li><i style="background:#3b0f70"></i>COMMERCIAL</li><li><i style="background:#4b117b"></i>COMMERCIAL &amp; RESIDENTIAL</li><li><i style="background:#5c167f"></i>EDUCATIONAL INSTITUTION</li><li><i style="background:#6c1d81"></i>HEALTH &amp; MEDICAL CARE</li><li><i style="background:#7c2382"></i>HOTEL</li><li><i style="background:#8c2981"></i>MASS RAPID TRANSIT</li><li><i style="background:#9c2e7f"></i>OPEN SPACE</li><li><i style="background:#ad347c"></i>PARK</li><li><i style="background:#be3977"></i>PLACE OF WORSHIP</li><li><i style="background:#cd3f71"></i>PORT / AIRPORT</li><li><i style="background:#dc4869"></i>RESERVE SITE</li><li><i style="background:#eb5761"></i>RESIDENTIAL</li><li><i style="background:#f2665c"></i>RESIDENTIAL WITH COMMERCIAL AT 1ST STOREY</li><li><i style="background:#f9795d"></i>ROAD</li><li><i style="background:#fc8c63"></i>SPECIAL USE</li><li><i style="background:#fe9f6d"></i>SPORTS &amp; RECREATION</li><li><i style="background:#feb27a"></i>TRANSPORT FACILITIES</li><li><i style="background:#fec488"></i>UTILITY</li><li><i style="background:#fed799"></i>WATERBODY</li><li><i style="background:#fdeaab"></i>WHITE</li><li><i style="background:#fcfdbf"></i></li><li><i style="background:#f4a3b4"></i>G_MP14_LAND_USE_PL</li>
          </ul>
          <h3>Google Maps</h3>
        </div>
        <div class="sel"><i></i><i></i><i></i><i></i><i></i><i></i><i></i><i></i></div>
      </div>
    </div>

    <div class="panels">
      <div class="ptabs"><button class="on">Items</button><button>Undo History</button></div>
      <div class="phead"><span>Items</span><button aria-label="Float"><svg width="9" height="10"><use href="#float"/></svg></button><button aria-label="Close"><svg width="10" height="10"><use href="#x"/></svg></button></div>
      <div class="tree">
        <table>
          <thead><tr><th><svg class="grey" width="20" height="20"><use href="#eye"/></svg></th><th><svg width="16" height="20"><path d="M3.500 10V6a4.500 4.500 0 0 1 9 0v4" fill="none" stroke="#999" stroke-width="2"/><rect y="9" width="16" height="10" rx="1" fill="#666"/></svg></th><th>Item</th></tr></thead>
          <tbody>
            <tr><td><input type="checkbox" checked aria-label="Show legend"></td><td><input type="checkbox" aria-label="Lock legend"></td><td><svg width="18" height="18"><path d="M1 1h4v3H1zM1 7.500h4v3H1zM1 14h4v3H1z" fill="#aaa" stroke="#333"/><path d="M7 2.500h7M7 9h11M7 15.500h5" stroke="#aaa" stroke-width="2"/></svg><span>Legend</span></td></tr>
            <tr><td><input type="checkbox" checked aria-label="Show scalebar"></td><td><input type="checkbox" aria-label="Lock scalebar"></td><td><svg width="18" height="18"><path d="M0 6h18v6H0z" fill="#aaa"/><path d="M2 9h3M12 9h4" stroke="#333" stroke-width="3"/><path d="M7 9h4" stroke="#eee" stroke-width="3"/></svg><span>&lt;Scalebar&gt;</span></td></tr>
            <tr><td><input type="checkbox" checked aria-label="Show map"></td><td><input type="checkbox" aria-label="Lock map"></td><td><svg width="18" height="18"><path d="M3 1.500h14.500v15H3z" fill="url(#gRoll)" stroke="#aaa"/><path d="M.500 2a1 1 0 0 1 3 0v13h-3z" fill="#eee" stroke="#999"/></svg><span><b>Map 1</b></span></td></tr>
          </tbody>
        </table>
      </div>
      <div class="ptabs low"><button>Layout</button><button class="on">Item Properties</button><button>Guides</button><button>Atlas</button></div>
      <div class="phead"><span>Item Properties</span><button aria-label="Float"><svg width="9" height="10"><use href="#float"/></svg></button><button aria-label="Close"><svg width="10" height="10"><use href="#x"/></svg></button></div>
      <div class="mapbar">Map 1</div>
      <div class="props">
        <form>
          <fieldset>
            <legend>Main properties</legend>
            <button type="button" class="wide">Update preview</button>
            <div class="row"><label for="scale">Scale</label><input id="scale" value="61,520"><button type="button" class="ddb" aria-label="Data defined"><svg><use href="#dd"/></svg></button></div>
            <div class="row"><label for="rot">Map rotation</label><span class="spin"><input id="rot" value="0.00 º"><span><svg width="8" height="5"><path d="M0 5h8L4 0z"/></svg><svg width="8" height="5"><path d="M0 0h8L4 5z"/></svg></span></span><button type="button" class="ddb" aria-label="Data defined"><svg><use href="#dd"/></svg></button></div>
            <div class="row crs"><label for="crs">CRS</label><select id="crs"><option>Use project CRS</option></select><button type="button" class="sq" aria-label="Select CRS"><svg width="20" height="20"><circle cx="10" cy="11" r="8" fill="#9cc7ef" stroke="#6a93b8"/><path d="M1 9l4-7h9l5 7z" fill="#b9bcc0" stroke="#888"/><path d="M6 2v17M10 2v17M14 2v17M2 14h16" stroke="#777" stroke-width=".700" fill="none"/><rect x="11" y="11" width="9" height="9" fill="#c7a20a"/><path d="M13 18l5-5" stroke="#fff" stroke-width="2"/></svg></button></div>
            <label class="chk"><input type="checkbox" checked>Draw map canvas items</label>
          </fieldset>
          <fieldset class="layers">
            <legend>Layers</legend>
            <div class="row"><label class="chk"><input type="checkbox">Follow map theme</label><select class="theme" aria-label="Map theme"><option>(none)</option></select><button type="button" class="ddb" aria-label="Data defined"><svg><use href="#dd"/></svg></button></div>
            <div class="row"><label class="chk"><input type="checkbox">Lock layers</label><button type="button" class="sq push" aria-label="Layer visibility"><svg class="blue" width="20" height="20"><use href="#eye"/><path d="M12 15h8l-4 5z"/></svg></button><button type="button" class="ddb" aria-label="Data defined"><svg><use href="#dd"/></svg></button></div>
            <label class="chk off"><input type="checkbox" disabled>Lock styles for layers</label>
          </fieldset>
          <fieldset class="ext4">
            <legend>Extents</legend>
            <div class="row"><label for="xmin">X min</label><input id="xmin" value="14,673.300"><button type="button" class="ddb" aria-label="Data defined"><svg><use href="#dd"/></svg></button></div>
            <div class="row"><label for="ymin">Y min</label><input id="ymin" value="25,323.179"><button type="button" class="ddb" aria-label="Data defined"><svg><use href="#dd"/></svg></button></div>
          </fieldset>
        </form>
        <div class="vbar"><svg width="12" height="8"><path d="M1 7l5-5 5 5" fill="none" stroke="#505050" stroke-width="2"/></svg><i></i><svg width="12" height="8"><path d="M1 1l5 5 5-5" fill="none" stroke="#505050" stroke-width="2"/></svg></div>
      </div>
    </div>
  </div>

  <footer class="status">
    <span class="msg">1 item selected</span><span class="sx">x: 306.135 mm</span><span class="sy">y: 141.55 mm</span><span class="sp">page: 1</span>
    <select aria-label="Zoom"><option>63.4%</option></select>
    <input type="range" min="0" max="100" value="6" aria-label="Zoom level">
    <svg width="12" height="12"><path d="M9 0h3v3H9zM9 4.500h3v3H9zM4.500 4.500h3v3h-3zM9 9h3v3H9zM4.500 9h3v3h-3zM0 9h3v3H0z" fill="#bbb"/></svg>
  </footer>
</section>
<script src="script.js"></script>
</body>
</html>
```
FILE: styles.css
```css
* { box-sizing: border-box; }
html, body { height: 100%; }
body { margin: 0; display: flex; flex-direction: column; background: #fff; overflow: hidden; position: relative; font-family: Roboto, "Liberation Sans", sans-serif; }
button { border: 0; background: none; padding: 0; margin: 0; font: inherit; color: inherit; display: flex; align-items: center; justify-content: center; flex: none; }
ul { list-style: none; margin: 0; padding: 0; }
svg { display: block; flex: none; }
.defs { position: absolute; width: 0; height: 0; }

/* browser frame */
.chrome { flex: none; font-family: "Open Sans", "Noto Sans", sans-serif; }
.strip { height: 35px; background: #f5f5f5; display: flex; border-bottom: 1px solid #aaa; }
.tabs { display: flex; padding-left: 8px; height: 35px; }
.tab { width: 193px; margin-right: -14px; padding: 0 20px 0 17px; display: flex; align-items: center; position: relative; font-size: 14px; color: #222; isolation: isolate; }
.tab::before, .tab::after { content: ""; position: absolute; z-index: -1; inset: 0; clip-path: polygon(14px 0, 179px 0, 100% 100%, 0 100%); background: #999; }
.tab::after { clip-path: polygon(15px 1px, 178px 1px, 192px 100%, 1px 100%); background: #d0d0d0; }
.tab.on { z-index: 1; }
.tab.on::after { background: #f2f2f2; }
.fav { width: 19px; height: 19px; margin-right: 8px; }
.tab span { flex: 1; white-space: nowrap; overflow: hidden; mask-image: linear-gradient(90deg, #000 80%, transparent); }
.tab button { width: 20px; margin-left: 7px; margin-right: -1px; color: #111; }
.tab button svg { width: 10px; height: 10px; }
.newtab { width: 36px; height: 21px; margin: 8px 0 0 22px; background: #cbcbcb; border: 1px solid #b7b7b7; border-radius: 3px; transform: skewX(16deg); }
.wbtns { margin-left: auto; display: flex; }
.wbtns button { width: 57px; height: 34px; }
.wbtns .hov { background: #dadada; }
.bar { height: 47px; background: #f2f2f2; border-bottom: 1px solid #b3b3b3; display: flex; align-items: center; padding: 0 4px 0 5px; }
.bar > button { width: 35px; }
.bar .ext { width: 40px; }
.bar .ext:last-child { width: 36px; }
.omni { flex: 1; height: 35px; margin-left: 5px; background: #fff; border: 1px solid #a9a9a9; border-radius: 3px; display: flex; align-items: center; padding: 0 7px 0 11px; font-size: 17px; white-space: nowrap; }
.sec { color: #188038; margin-left: 10px; padding-right: 11px; border-right: 1px solid #bbb; }
.url { margin-left: 8px; color: #777; flex: 1; }
.url b { font-weight: 400; color: #188038; }
.url i { font-style: normal; color: #000; }

/* page behind */
.site { flex: 1; display: flex; position: relative; min-height: 0; overflow: hidden; }
.side { width: 417px; background: #f5f7f9; border-right: 1px solid #e6ecf1; position: relative; flex: none; font-size: 20px; line-height: 33px; color: #9daab6; }
.side ul { display: flex; flex-direction: column; gap: 11px; margin: -3px 0 0 122px; }
.side a { color: inherit; text-decoration: none; }
.side .cur { color: #b94fc9; }
.addnew { color: #6f7c87; margin: 19px 0 0 98px; gap: 8px; }
.sidescroll, .mainscroll { position: absolute; top: 0; right: 0; width: 22px; bottom: 0; background: #f1f1f1; padding: 9px 6px; }
.sidescroll { bottom: auto; height: 60px; }
.mainscroll { display: flex; flex-direction: column; align-items: center; padding: 9px 0 8px; width: 21px; }
.mainscroll i { width: 17px; height: 145px; background: #c1c1c1; margin: auto 0 9px; }
.doc { flex: 1; position: relative; overflow: hidden; font-size: 20px; color: #242a31; }
.ring { position: absolute; left: 54px; top: -24px; width: 34px; height: 34px; border: 1px solid #d3dce4; border-radius: 50%; }
.cut { position: absolute; left: 110px; top: -25px; margin: 0; line-height: 32px; font-weight: 500; white-space: nowrap; }
.tail { position: absolute; left: 1305px; top: 88px; margin: 0; line-height: 32px; }
.dock { position: absolute; left: 75px; right: 95px; bottom: 29px; height: 75px; display: flex; gap: 30px; color: #3884ff; }
.tune { width: 75px; background: #3884ff; border-radius: 3px; }
.draftbar { flex: 1; background: #c0d8ff; border-radius: 3px; display: flex; align-items: center; position: relative; padding: 27px 20px 0 19px; }
.chev { align-self: flex-start; margin-top: 5px; }
.badge { background: #f67c01; color: #fff; font-weight: 700; font-size: 14px; line-height: 21px; border-radius: 11px; width: 67px; text-align: center; margin: 2px 10px 0 20px; }
.mod { font-size: 16px; margin-top: 2px; }
.vr { width: 2px; height: 22px; background: #3884ff; margin-left: 88px; margin-top: -14px; }
.acts { position: absolute; right: 20px; top: 19px; height: 37px; display: flex; align-items: center; font-size: 19px; }
.acts svg + svg { margin-left: 31px; }
.cancel { margin-left: 36px; gap: 15px; }
.savebtn { width: 115px; height: 37px; background: #3884ff; color: #fff; border-radius: 3px; margin-left: 30px; gap: 16px; padding-left: 3px; }
.taskbar { height: 2px; background: #111; flex: none; }

/* layout window */
.win { position: absolute; z-index: 2; left: 200px; right: 182px; top: 108px; bottom: 69px; border: 1px solid #1883d7; background: #f0f0f0; box-shadow: 0 4px 20px rgba(0,0,0,.4); display: flex; flex-direction: column; color: #000; font-family: "DejaVu Sans Condensed", "Noto Sans", sans-serif; font-size: 13px; line-height: 16px; }
.title { height: 36px; background: #fff; display: flex; align-items: center; padding: 0 2px 0 8px; flex: none; }
.title h1 { font: 400 14px "Open Sans", "Noto Sans", sans-serif; margin: 0 auto 0 6px; }
.title button { width: 58px; height: 36px; }
.menu { height: 23px; background: #fff; display: flex; gap: 14px; padding: 2px 0 0 7px; flex: none; }
.tools { height: 34px; border-bottom: 1px solid #b4b4b4; display: flex; align-items: center; flex: none; }
.tools button { width: 31px; height: 32px; }
.tools button svg, .box button svg { width: 24px; height: 24px; }
.grip { width: 3px; height: 26px; margin: 0 4px; background: repeating-linear-gradient(#b5b5b5 0 2px, transparent 2px 5px); }
.sep { width: 1px; height: 24px; background: #cfcfcf; margin: 0 3px; }
.edge { width: 1px; height: 33px; background: #b4b4b4; margin: 0 1px; }
.feature { appearance: none; width: 78px; height: 33px; border: 2px solid #ccc; background: #f0f0f0 url("data:image/svg+xml,%3Csvg xmlns='http://www.w3.org/2000/svg' width='20' height='29'%3E%3Cpath d='M0 0h20v29H0z' fill='%23fff'/%3E%3Cpath d='M6 12l4 5 4-5' fill='none' stroke='%23aaa'/%3E%3C/svg%3E") right center no-repeat; color: #777; font: inherit; padding-left: 4px; opacity: 1; }

.work { flex: 1; display: flex; min-height: 0; }
.box { width: 35px; border-right: 1px solid #b4b4b4; display: flex; flex-direction: column; align-items: center; padding: 4px 0 0 1px; flex: none; }
.hgrip { width: 26px; height: 3px; margin-bottom: 5px; background: repeating-linear-gradient(90deg, #b5b5b5 0 2px, transparent 2px 4px); }
.box button { width: 31px; height: 30px; }
.box .on { background: #bcd9f2; border: 1px solid #90c8f6; }
.view { flex: 1; display: grid; grid-template-columns: 24px 1fr; grid-template-rows: 24px 1fr; min-width: 0; border-bottom: 1px solid #828790; margin-right: 5px; }
.rh { grid-column: 1 / 3; width: 100%; height: 24px; }
.rv { width: 24px; height: 100%; min-height: 0; }
.rh text, .rv text { font-size: 13px; fill: #444; }
.canvas { position: relative; overflow: hidden; background: #d7d7d7; }
.paper, .shadow { position: absolute; left: 96px; top: 46px; width: 910px; height: 629px; background: #fff; }
.shadow { left: 104px; top: 54px; width: 880px; background: #969696; }
.map { position: absolute; left: 96px; top: 46px; }
.lbl { font-family: Roboto, sans-serif; }
.lbl text { paint-order: stroke; stroke: #fff; stroke-width: 2px; stroke-opacity: .8; }
.lbl .plain text { stroke: none; }
.scale text { font-size: 13px; }
.legend { position: absolute; left: 681px; top: 46px; width: 326px; height: 680px; background: #fff; padding: 7px 5px; font-size: 13px; }
.legend h2, .legend h3 { font-weight: 400; margin: 0; }
.legend h2 { font-size: 17px; line-height: 22px; margin-bottom: 5px; }
.legend h3 { font-size: 13px; line-height: 18px; margin: 4px 0 0; }
.legend ul { display: grid; grid-auto-rows: 1fr; }
.legend .top { height: 58px; }
.legend .cls { height: 526px; }
.legend li { display: flex; align-items: center; gap: 5px; white-space: nowrap; }
.legend li i { width: 22px; height: 13px; border: 1px solid #666; }
.legend .road i { background: #000; border: 0; border-radius: 6px; width: 30px; height: 11px; margin: 0 -4px; }
.sel { position: absolute; left: 96px; top: 46px; width: 890px; height: 630px; border: 1px dashed #5a1438; display: grid; grid-template-columns: 1fr 1fr 1fr; align-content: space-between; }
.sel i { width: 10px; height: 10px; background: #fff; border: 1px solid #4a90c8; justify-self: center; }
.sel i:nth-child(1), .sel i:nth-child(4), .sel i:nth-child(6) { justify-self: start; }
.sel i:nth-child(3), .sel i:nth-child(5), .sel i:nth-child(8) { justify-self: end; }
.sel i:nth-child(5) { grid-column: 3; }

/* docks */
.panels { width: 390px; display: flex; flex-direction: column; flex: none; }
.ptabs { display: flex; align-items: flex-end; height: 25px; border-bottom: 1px solid #999; flex: none; }
.ptabs button { height: 22px; padding: 0 11px; border: 1px solid #d5d5d5; border-bottom: 0; }
.ptabs .on { background: #fff; height: 25px; margin-bottom: -1px; padding: 0 14px 3px; }
.low { margin-top: 5px; padding-left: 2px; }
.low button { padding: 0 11px; }
.low .on { padding: 0 13px 3px; }
.phead { height: 23px; border: 1px solid #b3b3b3; background: #d9d9d9; display: flex; align-items: center; padding: 0 3px; margin-top: 1px; flex: none; }
.phead span { margin-right: auto; }
.phead button { margin-left: 8px; }
.tree { border: 1px solid #828790; background: #fff; height: 184px; margin-top: 1px; flex: none; }
table { border-collapse: collapse; }
th { height: 29px; padding: 0 5px; border-right: 1px solid #e0e0e0; font-weight: 400; text-align: left; }
th:first-child { width: 36px; }
th:nth-child(2) { width: 36px; }
th:last-child { border: 0; }
td { height: 24px; padding: 0 3px; }
td input { display: block; }
td:last-child { display: flex; align-items: center; gap: 7px; padding-left: 4px; }
td span { margin-top: -6px; }
input[type=checkbox] { appearance: none; width: 16px; height: 16px; border: 1px solid #222; background: #fff; margin: 0; flex: none; }
input[type=checkbox]:checked { background: #fff url("data:image/svg+xml,%3Csvg xmlns='http://www.w3.org/2000/svg' width='14' height='14'%3E%3Cpath d='M2 7l3 4 7-8' fill='none' stroke='%23333' stroke-width='1.500'/%3E%3C/svg%3E") center no-repeat; }
input[type=checkbox]:disabled { border-color: #ccc; }
.grey { color: #777; }
.blue { color: #6f9bd1; }
.mapbar { background: #c6c6c6; font-weight: 700; line-height: 20px; padding-left: 4px; margin-top: 2px; flex: none; }
.props { flex: 1; border: 1px solid #828790; display: flex; min-height: 0; overflow: hidden; }
form { flex: 1; padding: 11px 12px 0 11px; overflow: hidden; }
fieldset { border: 1px solid #dcdcdc; margin: 0 0 8px; padding: 12px 11px 11px; min-width: 0; display: flex; flex-direction: column; gap: 12px; }
fieldset legend { font-weight: 700; color: #3a3a3a; padding: 0 6px 0 1px; margin-left: -11px; display: flex; align-items: center; gap: 8px; font-size: 13px; }
fieldset legend::before { content: ""; border: 6px solid transparent; border-top: 8px solid #333; border-bottom: 0; }
.wide { background: #e1e1e1; border: 1px solid #adadad; height: 26px; margin-bottom: -2px; }
.row { display: flex; align-items: center; height: 22px; }
.row > label:not(.chk) { width: 78px; flex: none; }
.row input:not([type=checkbox]), .spin { flex: 1; min-width: 0; height: 22px; border: 1px solid #7a7a7a; background: #fff; font: inherit; padding: 0 2px; }
.spin { display: flex; padding: 1px; }
.row .spin input { border: 0; height: 18px; padding: 0 1px; }
.spin span { width: 15px; background: #e8e8e8; border: 1px solid #bbb; display: flex; flex-direction: column; align-items: center; justify-content: space-around; }
.ddb { width: 26px; margin-left: 9px; margin-right: 2px; }
.ddb svg { width: 26px; height: 24px; }
.row select { appearance: none; border: 1px solid #adadad; background: #e1e1e1 url("data:image/svg+xml,%3Csvg xmlns='http://www.w3.org/2000/svg' width='12' height='6'%3E%3Cpath d='M0 0h8L4 5z'/%3E%3C/svg%3E") right center no-repeat; height: 26px; flex: 1; font: inherit; padding: 0 3px; color: #000; }
.row .theme { height: 22px; flex: none; width: 138px; margin-left: auto; }
.sq { width: 25px; height: 25px; border: 1px solid #adadad; background: #e1e1e1; margin-left: 7px; }
.push { margin-left: auto; }
.crs { margin-top: -1px; }
.chk { display: flex; align-items: center; gap: 6px; white-space: nowrap; margin-top: -1px; }
.off { color: #888; }
.layers, .ext4 { padding-top: 15px; }
.ext4 .row > label:not(.chk) { width: 42px; }
.vbar { width: 20px; margin-right: 1px; display: flex; flex-direction: column; align-items: center; padding: 8px 0; border-left: 1px solid #fff; }
.vbar i { width: 19px; height: 150px; background: #cdcdcd; margin: 5px 0 auto; }
.status { height: 27px; display: flex; align-items: center; padding: 2px 2px 0 6px; flex: none; }
.msg { margin-right: auto; }
.sx { margin-right: 18px; }
.sy { margin-right: 26px; }
.sp { width: 105px; }
.status select { appearance: none; width: 122px; height: 22px; border: 1px solid #7a7a7a; background: #fff url("data:image/svg+xml,%3Csvg xmlns='http://www.w3.org/2000/svg' width='16' height='8'%3E%3Cpath d='M1 1l5 5 5-5' fill='none' stroke='%23555'/%3E%3C/svg%3E") right center no-repeat; font: inherit; padding: 0 4px; }
.status input { appearance: none; width: 100px; height: 22px; margin: 0 6px; background: linear-gradient(#d6d6d6, #d6d6d6) center / 100% 4px no-repeat; }
.status input::-webkit-slider-thumb { appearance: none; width: 12px; height: 21px; background: #0078d7; }
.status > svg { align-self: flex-end; margin-bottom: 2px; }
```
FILE: script.js
```js
const NS = 'http://www.w3.org/2000/svg';
function add(parent, tag, attrs, text) {
  const el = document.createElementNS(NS, tag);
  for (const k in attrs) el.setAttribute(k, attrs[k]);
  if (text !== undefined) el.textContent = text;
  parent.appendChild(el);
  return el;
}

// Rulers: one tick each 5 mm, a label each 20 mm
const MM = 2.9935;
const h = document.getElementById('rulerH');
const v = document.getElementById('rulerV');
for (let mm = -30; mm <= 325; mm += 5) {
  const p = Math.round(120 + mm * MM) + 0.5;
  const major = mm % 20 === 0;
  const len = major ? 24 : mm % 10 === 0 ? 8 : 5;
  add(h, 'path', { d: `M${p} ${24 - len}V24`, stroke: '#333' });
  if (major) add(h, 'text', { x: p + 1, y: 14 }, mm);
}
for (let mm = -15; mm <= 220; mm += 5) {
  const p = Math.round(46 + mm * MM) + 0.5;
  const major = mm % 20 === 0;
  const len = major ? 24 : mm % 10 === 0 ? 8 : 5;
  add(v, 'path', { d: `M${24 - len} ${p}H24`, stroke: '#333' });
  if (major) add(v, 'text', { x: 14, y: p + 4, transform: `rotate(-90 14 ${p + 4})`, 'text-anchor': 'end' }, mm);
}
add(h, 'path', { d: 'M1037.5 0V24', stroke: '#f00' });
add(v, 'path', { d: 'M0 470.5H24', stroke: '#f00', 'stroke-width': 1 });

// Land parcels: jittered grids inside the planning area
let seed = 7;
const rnd = () => { seed = (seed * 16807) % 2147483647; return seed / 2147483647; };
function mesh(parent, x0, y0, x1, y1, cell, angle, stroke, width, keep, palette) {
  const g = add(parent, 'g', { transform: `rotate(${angle} ${(x0 + x1) / 2} ${(y0 + y1) / 2})` });
  const nx = Math.ceil((x1 - x0) / cell), ny = Math.ceil((y1 - y0) / cell);
  const pts = [];
  for (let j = 0; j <= ny; j++) {
    pts.push([]);
    for (let i = 0; i <= nx; i++) pts[j].push([(x0 + i * cell + (rnd() - 0.5) * cell * 0.7).toFixed(1), (y0 + j * cell + (rnd() - 0.5) * cell * 0.7).toFixed(1)]);
  }
  let d = '';
  for (let j = 0; j < ny; j++) for (let i = 0; i < nx; i++) {
    const a = pts[j][i], b = pts[j][i + 1], c = pts[j + 1][i + 1], e = pts[j + 1][i];
    if (rnd() < keep) d += `M${a}L${b}`;
    if (rnd() < keep) d += `M${a}L${e}`;
    if (palette && rnd() < 0.22) add(g, 'path', { d: `M${a}L${b}L${c}L${e}z`, fill: palette[Math.floor(rnd() * palette.length)] });
  }
  add(g, 'path', { d, stroke, 'stroke-width': width, fill: 'none' });
}
mesh(document.getElementById('blocks'), 400, 150, 1560, 1560, 27, 32, '#5a3034', 2.5, 0.75,
  ['#5b167f', '#5b167f', '#dc4869', '#dc4869', '#cd3f71', '#f2665c', '#2a115a', '#f2665c', '#8c2981']);

const dense = document.getElementById('dense');
const areas = [
  [[740,345],[800,330],[830,285],[890,300],[915,350],[925,395],[880,450],[820,488],[755,490],[735,430]],
  [[950,350],[1070,300],[1108,335],[1120,480],[1060,450],[990,440],[948,400]],
  [[1215,430],[1330,400],[1365,450],[1380,500],[1435,560],[1430,600],[1330,565],[1220,520]],
  [[985,590],[1040,600],[1060,680],[1110,650],[1090,540],[1060,480],[1200,530],[1270,625],[1360,630],[1430,640],[1400,700],[1310,780],[1240,830],[1110,800],[1010,700]],
  [[960,690],[1030,740],[1040,840],[960,815],[930,760]],
  [[570,665],[640,640],[700,700],[680,760],[600,740]],
  [[750,545],[820,560],[790,625],[740,625]],
  [[760,1130],[930,1180],[940,1225],[790,1165]],
  [[1040,1310],[1150,1350],[1150,1400],[1060,1390]],
  [[1020,480],[1090,500],[1080,545],[1010,520]],
  [[735,285],[800,290],[800,330],[760,315]],
  [[1045,235],[1090,228],[1075,280]],
  [[600,760],[660,780],[700,860],[640,850]],
  [[1280,1110],[1340,1120],[1320,1190],[1275,1180]],
  [[700,860],[760,850],[770,900],[700,900]],
  [[780,340],[740,400],[770,480],[740,480]]
];
areas.forEach((pts, n) => {
  const clip = add(dense, 'clipPath', { id: 'dn' + n });
  add(clip, 'polygon', { points: pts.join(' ') });
  const g = add(dense, 'g', { 'clip-path': `url(#dn${n})` });
  const xs = pts.map(p => p[0]), ys = pts.map(p => p[1]);
  add(g, 'polygon', { points: pts.join(' '), fill: '#b84850' });
  mesh(g, Math.min(...xs) - 60, Math.min(...ys) - 60, Math.max(...xs) + 60, Math.max(...ys) + 60, 8, 20 + n * 13, '#432d2d', 5, 0.95);
});
```
